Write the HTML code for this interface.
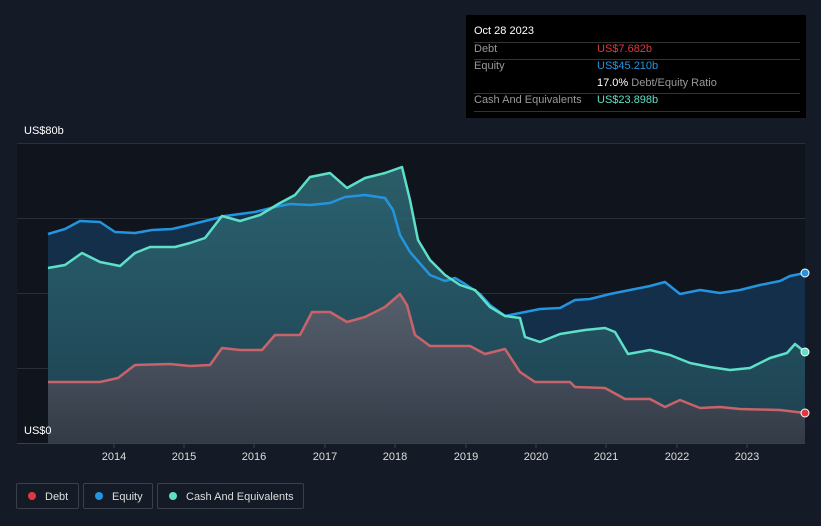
<!DOCTYPE html><html><head><style>
body{margin:0;width:821px;height:526px;background:#151b26;font-family:"Liberation Sans",sans-serif;overflow:hidden;position:relative}
.t{position:absolute;color:#fff;font-size:11px}
.tip{position:absolute;left:466px;top:15px;width:340px;height:103px;background:#000;}
.tip div{position:absolute;font-size:11px}
.ln{position:absolute;left:8px;width:326px;height:1px;background:#333}
.lg{position:absolute;top:483px;height:26px;border:1px solid #3a404b;border-radius:2px;color:#ddd;font-size:11px;line-height:26px;box-sizing:border-box}
.lg i{display:inline-block;width:8px;height:8px;border-radius:50%;margin:0 9px 0 11px;vertical-align:-0px}
</style></head><body>
<svg width="821" height="526" style="position:absolute;left:0;top:0">
<defs>
<linearGradient id="c" x1="0" y1="0" x2="0" y2="1"><stop offset="0" stop-color="#2f6b76"/><stop offset="1" stop-color="#1f4452"/></linearGradient>
<linearGradient id="d" x1="0" y1="0" x2="0" y2="1"><stop offset="0" stop-color="#56606c"/><stop offset="1" stop-color="#333b47"/></linearGradient>
</defs>
<rect x="17" y="143" width="788" height="300" fill="#10141c"/>
<g stroke="#2a303a" stroke-width="1"><line x1="17" y1="143.5" x2="805" y2="143.5"/><line x1="17" y1="218.5" x2="805" y2="218.5"/><line x1="17" y1="293.5" x2="805" y2="293.5"/><line x1="17" y1="368.5" x2="805" y2="368.5"/></g>
<polygon fill="#142f4a" points="48,443 48,234 65,229 80,221 100,222 115,232 135,233 152,230 172,229 185,226 205,221 225,216 255,212 275,207 290,204 310,205 330,203 345,197 365,195 385,198 393,210 400,235 410,252 430,275 445,281 455,278 465,284 480,294 490,305 505,316 520,313 540,309 560,308 575,300 590,299 610,294 630,290 650,286 665,282 680,294 700,290 720,293 740,290 760,285 780,281 790,276 805,273 805,443"/>
<polygon fill="url(#c)" opacity="0.85" points="48,443 48,268 65,265 82,253 100,262 120,266 135,253 150,247 175,247 190,243 205,238 222,216 240,221 260,215 280,203 295,195 310,177 330,173 347,188 365,178 385,173 402,167 410,200 418,240 430,260 445,275 460,285 475,290 490,307 505,316 520,318 525,337 540,342 560,334 585,330 605,328 615,332 628,354 650,350 670,355 690,363 710,367 730,370 750,368 770,358 787,353 795,344 805,352 805,443"/>
<polygon fill="url(#d)" points="48,443 48,382 100,382 118,378 135,365 170,364 190,366 210,365 222,348 240,350 262,350 275,335 300,335 312,312 330,312 347,322 365,317 385,307 400,294 407,305 415,335 430,346 470,346 485,354 505,349 520,372 535,382 570,382 575,387 605,388 625,399 650,399 665,407 680,400 700,408 720,407 740,409 780,410 805,413 805,443"/>
<g fill="none" stroke-width="2.5" stroke-linejoin="round">
<polyline stroke="#2394e0" points="48,234 65,229 80,221 100,222 115,232 135,233 152,230 172,229 185,226 205,221 225,216 255,212 275,207 290,204 310,205 330,203 345,197 365,195 385,198 393,210 400,235 410,252 430,275 445,281 455,278 465,284 480,294 490,305 505,316 520,313 540,309 560,308 575,300 590,299 610,294 630,290 650,286 665,282 680,294 700,290 720,293 740,290 760,285 780,281 790,276 805,273"/>
<polyline stroke="#5ee0c8" points="48,268 65,265 82,253 100,262 120,266 135,253 150,247 175,247 190,243 205,238 222,216 240,221 260,215 280,203 295,195 310,177 330,173 347,188 365,178 385,173 402,167 410,200 418,240 430,260 445,275 460,285 475,290 490,307 505,316 520,318 525,337 540,342 560,334 585,330 605,328 615,332 628,354 650,350 670,355 690,363 710,367 730,370 750,368 770,358 787,353 795,344 805,352"/>
<polyline stroke="#c8636a" points="48,382 100,382 118,378 135,365 170,364 190,366 210,365 222,348 240,350 262,350 275,335 300,335 312,312 330,312 347,322 365,317 385,307 400,294 407,305 415,335 430,346 470,346 485,354 505,349 520,372 535,382 570,382 575,387 605,388 625,399 650,399 665,407 680,400 700,408 720,407 740,409 780,410 805,413"/>
</g>
<line x1="17" y1="443.5" x2="805" y2="443.5" stroke="#3a404b"/>
<g stroke="#3a404b"><line x1="114" y1="443" x2="114" y2="448"/><line x1="184" y1="443" x2="184" y2="448"/><line x1="254" y1="443" x2="254" y2="448"/><line x1="325" y1="443" x2="325" y2="448"/><line x1="395" y1="443" x2="395" y2="448"/><line x1="466" y1="443" x2="466" y2="448"/><line x1="536" y1="443" x2="536" y2="448"/><line x1="606" y1="443" x2="606" y2="448"/><line x1="677" y1="443" x2="677" y2="448"/><line x1="747" y1="443" x2="747" y2="448"/></g>
<circle cx="805" cy="273" r="4" fill="#2394e0" stroke="#fff" stroke-width="1"/>
<circle cx="805" cy="352" r="4" fill="#5ee0c8" stroke="#fff" stroke-width="1"/>
<circle cx="805" cy="413" r="4" fill="#e0383e" stroke="#fff" stroke-width="1"/>
<g fill="#ddd" font-size="11" font-family="Liberation Sans" text-anchor="middle"><text x="114" y="460">2014</text><text x="184" y="460">2015</text><text x="254" y="460">2016</text><text x="325" y="460">2017</text><text x="395" y="460">2018</text><text x="466" y="460">2019</text><text x="536" y="460">2020</text><text x="606" y="460">2021</text><text x="677" y="460">2022</text><text x="747" y="460">2023</text></g>
</svg>
<div class="t" style="left:24px;top:125px">US$80b</div>
<div class="t" style="left:24px;top:425px">US$0</div>
<div class="tip">
<div style="left:8px;top:10px;color:#fff">Oct 28 2023</div>
<div class="ln" style="top:27px"></div>
<div style="left:8px;top:28px;color:#999">Debt</div><div style="left:131px;top:28px;color:#e0383e">US$7.682b</div>
<div class="ln" style="top:44px"></div>
<div style="left:8px;top:45px;color:#999">Equity</div><div style="left:131px;top:45px;color:#2394e0">US$45.210b</div>
<div style="left:131px;top:62px;color:#999"><b style="color:#fff;font-weight:normal">17.0%</b> Debt/Equity Ratio</div>
<div class="ln" style="top:78px"></div>
<div style="left:8px;top:79px;color:#999">Cash And Equivalents</div><div style="left:131px;top:79px;color:#5ee0c8">US$23.898b</div>
<div class="ln" style="top:96px"></div>
</div>
<div class="lg" style="left:16px;width:63px"><i style="background:#e0383e"></i>Debt</div>
<div class="lg" style="left:83px;width:70px"><i style="background:#2394e0"></i>Equity</div>
<div class="lg" style="left:157px;width:147px"><i style="background:#5ee0c8"></i>Cash And Equivalents</div>
</body></html>
